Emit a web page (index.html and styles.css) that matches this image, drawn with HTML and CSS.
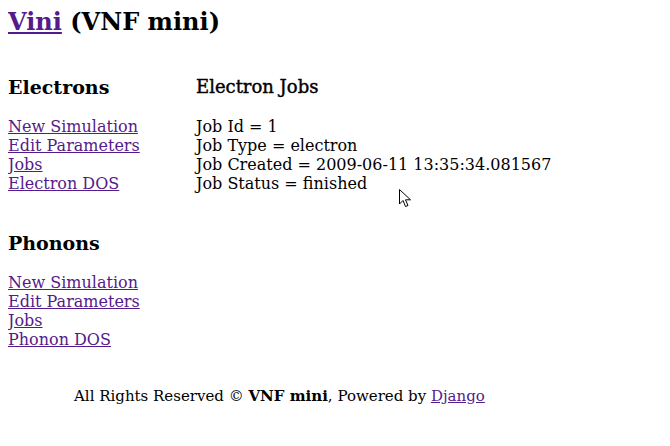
FILE: index.html
```html
<!DOCTYPE html>
<html>
<head>
<meta charset="utf-8">
<title>Vini (VNF mini)</title>
<link rel="stylesheet" href="styles.css">
</head>
<body>
<h1 class="title"><a href="#">Vini</a> (VNF mini)</h1>
<div class="layout">
  <div class="sidebar">
    <h3 class="section">Electrons</h3>
    <div class="links">
      <a href="#">New Simulation</a><br>
      <a href="#">Edit Parameters</a><br>
      <a href="#">Jobs</a><br>
      <a href="#">Electron DOS</a>
    </div>
    <h3 class="section">Phonons</h3>
    <div class="links">
      <a href="#">New Simulation</a><br>
      <a href="#">Edit Parameters</a><br>
      <a href="#">Jobs</a><br>
      <a href="#">Phonon DOS</a>
    </div>
  </div>
  <div class="main">
    <h3 class="main-title">Electron Jobs</h3>
    <div class="job">
      Job Id = 1<br>
      Job Type = electron<br>
      Job Created = 2009-06-11 13:35:34.081567<br>
      Job Status = finished
    </div>
  </div>
</div>
<div class="footer">All Rights Reserved © <b>VNF mini</b>, Powered by <a href="#">Django</a></div>
<svg class="cursor" width="14" height="20" viewBox="0 0 14 20"><path d="M0.5 0.5 L0.5 15 L4 11.5 L6.5 17.5 L9 16.5 L6.5 10.8 L11.5 10.8 Z" fill="#fff" stroke="#000" stroke-width="1" stroke-linejoin="miter"/></svg>
</body>
</html>
```
FILE: styles.css
```css
body {
  margin: 8px;
  font-family: "DejaVu Serif", serif;
  font-size: 16px;
  line-height: 19px;
  color: #000;
  background: #fff;
}
a { color: #551a8b; }
.title {
  font-size: 24px;
  line-height: 28px;
  margin: 0;
}
.layout {
  display: flex;
  margin-top: 40px;
}
.sidebar { width: 188px; }
.section {
  font-size: 19px;
  line-height: 22px;
  margin: 0 0 19px 0;
}
.links { margin-bottom: 39px; }
.links:last-child { margin-bottom: 38px; }
.main-title {
  font-size: 18px;
  line-height: 22px;
  font-weight: normal;
  -webkit-text-stroke: 0.4px #000;
  margin: 0 0 19px 0;
}
.footer {
  font-size: 15px;
  padding-left: 66px;
}
.cursor {
  position: absolute;
  left: 399px;
  top: 189px;
}
```
